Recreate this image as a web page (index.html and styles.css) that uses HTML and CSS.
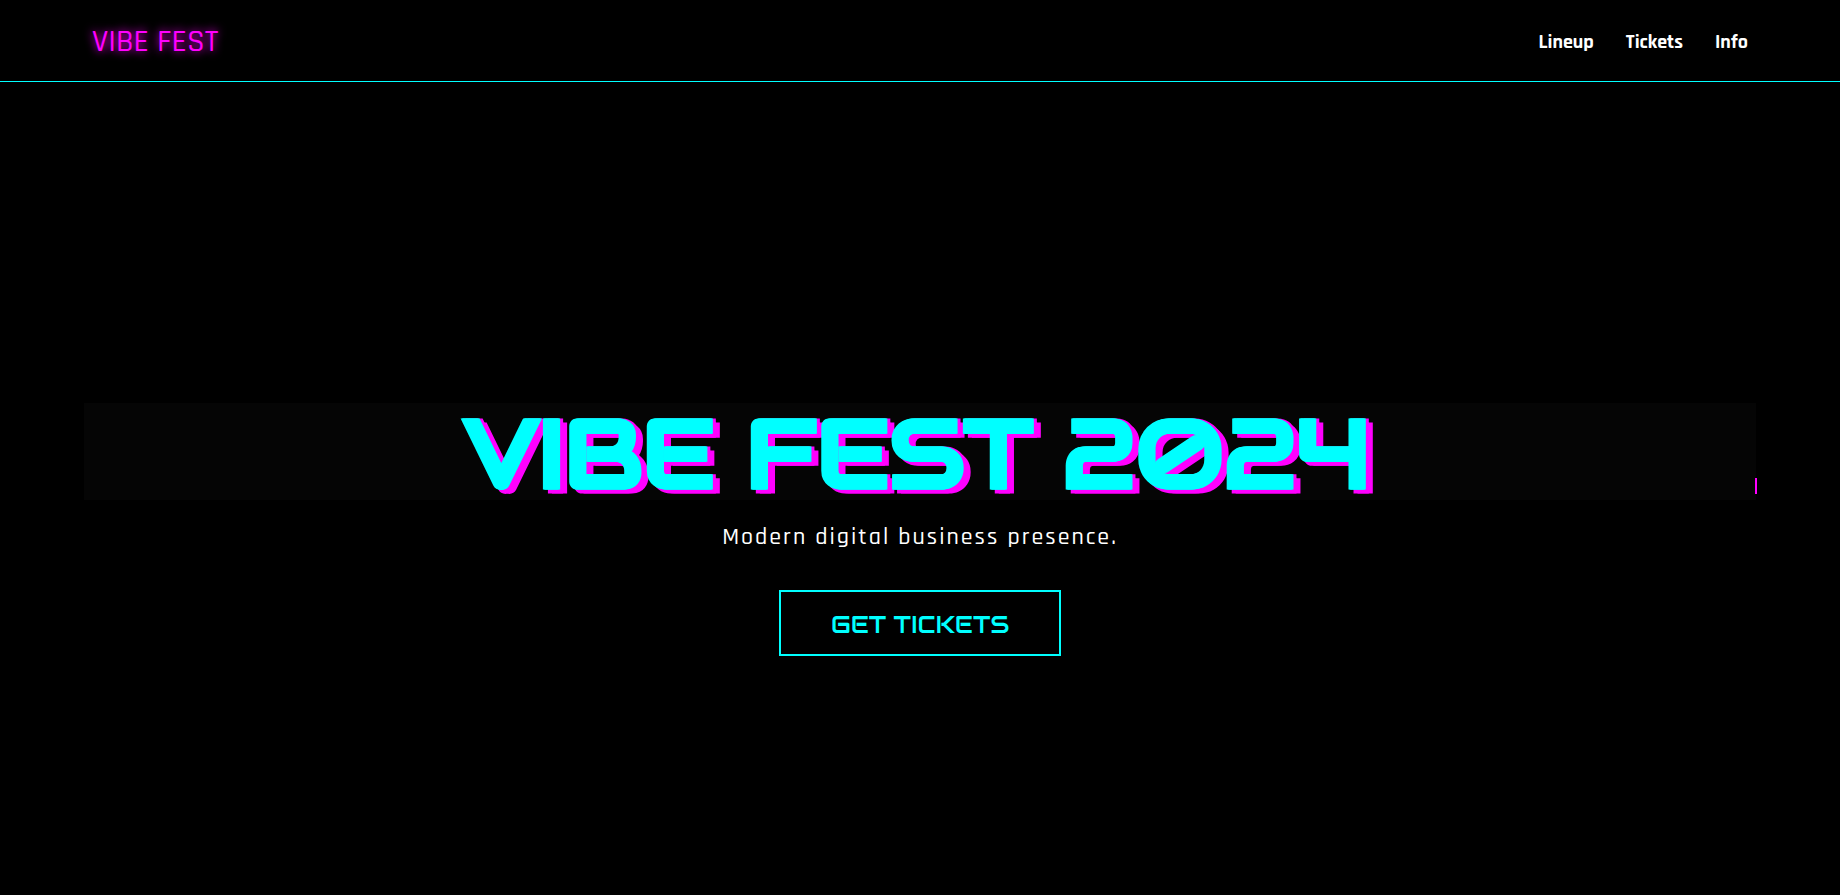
FILE: index.html
```html
<!DOCTYPE html>
<html lang="en">
<head>
<meta charset="utf-8">
<meta name="viewport" content="width=device-width, initial-scale=1">
<title>Vibe Fest 2024</title>
<link rel="stylesheet" href="styles.css">
</head>
<body>
<header class="site-header">
  <a class="logo" href="#top">VIBE FEST</a>
  <nav class="site-nav" aria-label="Main">
    <a href="#lineup">Lineup</a>
    <a href="#tickets">Tickets</a>
    <a href="#info">Info</a>
  </nav>
</header>
<main class="hero" id="top">
  <h1 class="hero-title">VIBE FEST 2024</h1>
  <p class="hero-tagline">Modern digital business presence.</p>
  <button class="hero-button" type="button">GET TICKETS</button>
</main>
</body>
</html>
```
FILE: styles.css
```css
:root {
  --cyan: #00ffff;
  --magenta: #ff00ff;
  --body-font: Rajdhani, Roboto, sans-serif;
  --display-font: Audiowide, Orbitron, "DejaVu Sans", sans-serif;
}

* {
  box-sizing: border-box;
}

body {
  margin: 0;
  background: #000;
  color: #fff;
  font-family: var(--body-font);
  font-weight: 500;
}

.site-header {
  display: flex;
  justify-content: space-between;
  align-items: center;
  padding: 21px 5% 19px;
  border-bottom: 1px solid var(--cyan);
}

.logo {
  color: var(--magenta);
  font-size: 32px;
  line-height: 41px;
  text-decoration: none;
  text-shadow: 0 0 10px var(--magenta);
}

.site-nav {
  display: flex;
  gap: 32px;
}

.site-nav a {
  color: #fff;
  font-size: 20px;
  font-weight: 700;
  text-decoration: none;
}

.hero {
  display: flex;
  flex-direction: column;
  align-items: center;
  justify-content: center;
  min-height: 100vh;
  padding: 0 84px;
  text-align: center;
}

.hero-title {
  position: relative;
  width: 100%;
  margin: 0 0 21px;
  padding: 6px 7px 0 0;
  background: #050505;
  color: var(--cyan);
  font-family: var(--display-font);
  font-size: 96px;
  font-weight: 700;
  line-height: 91px;
  text-shadow: 1px 0 var(--cyan), 2px 0 var(--cyan), 5px 0 var(--magenta), 5px 4px var(--magenta), 9px 4px var(--magenta);
}

/* Glitch fragment at the right edge of the title band */
.hero-title::after {
  content: "";
  position: absolute;
  right: -1px;
  bottom: 6px;
  width: 2px;
  height: 16px;
  background: var(--magenta);
}

.hero-tagline {
  margin: 0 0 37px;
  font-size: 24px;
  line-height: 32px;
  letter-spacing: 2px;
}

.hero-button {
  padding: 18px 50px 15px;
  border: 2px solid var(--cyan);
  background: transparent;
  color: var(--cyan);
  font-family: var(--display-font);
  font-size: 24px;
  font-weight: 400;
  line-height: 29px;
  cursor: pointer;
}
```
